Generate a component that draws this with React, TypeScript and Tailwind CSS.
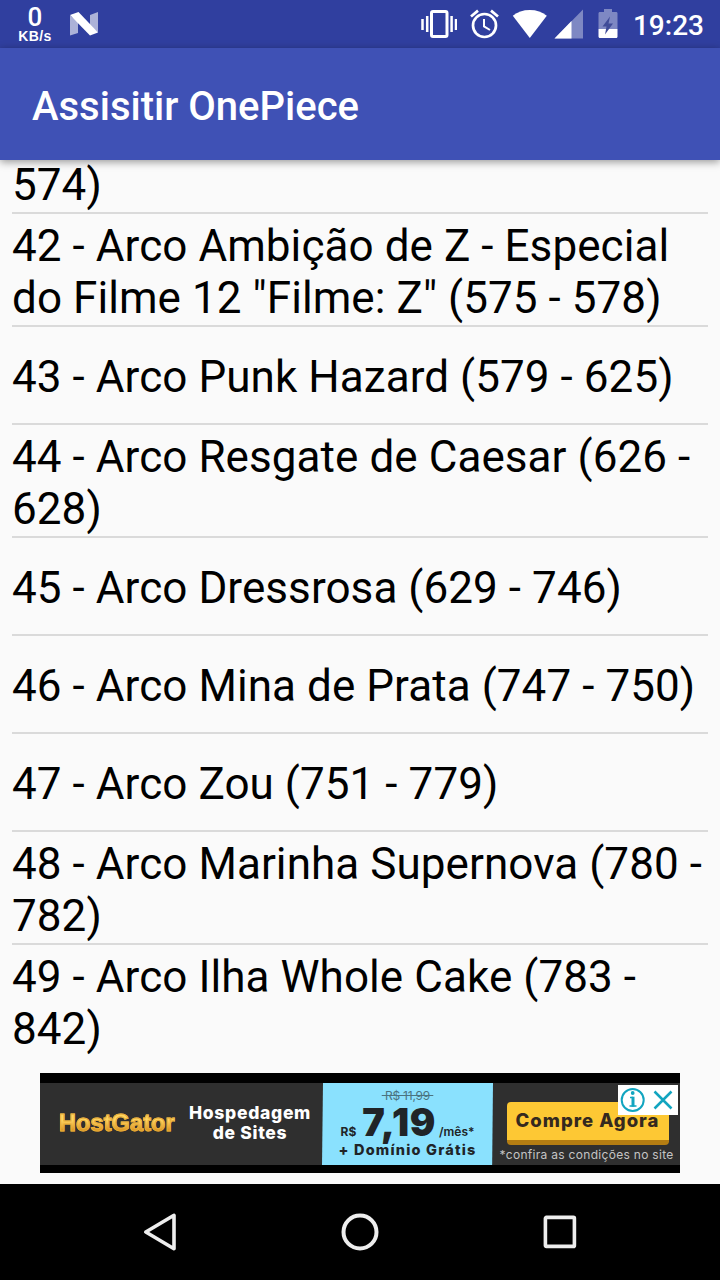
interface Arc {
  id: number
  title: string
}

const arcs: Arc[] = [
  { id: 42, title: 'Arco Ambição de Z - Especial do Filme 12 "Filme: Z" (575 - 578)' },
  { id: 43, title: 'Arco Punk Hazard (579 - 625)' },
  { id: 44, title: 'Arco Resgate de Caesar (626 - 628)' },
  { id: 45, title: 'Arco Dressrosa (629 - 746)' },
  { id: 46, title: 'Arco Mina de Prata (747 - 750)' },
  { id: 47, title: 'Arco Zou (751 - 779)' },
  { id: 48, title: 'Arco Marinha Supernova (780 - 782)' },
  { id: 49, title: 'Arco Ilha Whole Cake (783 - 842)' },
]

function StatusBar() {
  return (
    <div className="flex h-12 shrink-0 items-start bg-[#303f9f] text-white">
      <div className="ml-4 mt-[7px] flex w-[38px] flex-col items-center font-['Liberation_Sans',sans-serif] font-bold">
        <span className="h-5 font-['Roboto',sans-serif] text-[26px] font-medium leading-[21px]">0</span>
        <span className="text-[14px] leading-[18px] tracking-[0.4px]">KB/s</span>
      </div>
      <svg className="ml-4 mt-3 h-6 w-[28px]" viewBox="0 0 28 24" fill="#fff">
        <path d="M0 3.5 8 10v11L0 23.5zM20 3l8-3v20.5L20 14z" opacity=".6" />
        <path d="M0 3 8.5 0 28 20.5 20 23.5z" />
      </svg>

      <div className="grow" />

      {/* vibrate */}
      <svg className="mt-2.5 h-7 w-9" viewBox="0 0 36 28" fill="none" stroke="#fff">
        <rect x="10.5" y="1.5" width="15.5" height="25" rx="1.5" strokeWidth="3" />
        <path d="M1.5 9v11M35 9v11M6.2 6v16M30.6 6v16" strokeWidth="2.5" />
      </svg>
      {/* alarm */}
      <svg className="ml-[13px] mr-px mt-[9px] h-[30px] w-[29px]" viewBox="0 0 29 30" fill="none" stroke="#fff" strokeWidth="2.7">
        <circle cx="14.5" cy="16.5" r="11.5" />
        <path d="M1 7.5 8 1.6M28 7.5 21 1.6" />
        <path d="M14 10v7.4l6 3.6" strokeWidth="2" />
      </svg>
      {/* wifi */}
      <svg className="mx-3 mt-[9px] h-[30px] w-[36px]" viewBox="0 0 36 30" fill="#fff">
        <path d="M.8 6.8C5.5 3 11 1 17.8 1s12.3 2 17 5.8L17.8 29z" />
      </svg>
      {/* signal */}
      <svg className="-ml-[6px] mt-[9px] h-[30px] w-[30px]" viewBox="0 0 30 30" fill="#fff">
        <path d="M29 .5v29H.5z" opacity=".38" />
        <path d="M17.5 12v17.5H.5z" />
      </svg>
      {/* battery */}
      <svg className="ml-[14px] mr-px mt-[9px] h-[29px] w-5" viewBox="0 0 20 29" fill="#fff">
        <path d="M6 0h8v3h4c1 0 1.5.5 1.5 1.5V20H.5V4.5C.5 3.500 1 3 2 3h4z" opacity=".38" />
        <path d="M.5 20h19v7.5c0 .8-.4 1.5-1.5 1.5H2c-1 0-1.5-.7-1.5-1.5z" />
        <path d="M12 7.5 4.5 17.5h4L7 25.500 15 14.5h-4.5z" fill="#404c98" />
      </svg>
      <span className="ml-[14px] mr-4 mt-[9px] font-['Roboto',sans-serif] text-[28px] font-medium leading-[33px]">19:23</span>
    </div>
  )
}

function AdBanner() {
  return (
    <div className="relative mx-auto flex h-[100px] w-[640px] shrink-0 border-b-8 border-t-[10px] border-black bg-[#2f2f2f] font-['Inter',sans-serif]">
      <div className="flex w-[149px] items-center pb-px pl-[19px]">
        <span className="bg-linear-to-b from-[#ffd560] from-40% to-[#dc9521] to-70% bg-clip-text font-['Liberation_Sans',sans-serif] text-[23.5px] font-bold tracking-[0.1px] text-transparent [-webkit-text-stroke:1px_#e9ae38]">
          HostGator
        </span>
      </div>
      <div className="flex w-[122px] flex-col items-center whitespace-nowrap pt-5 text-[17.5px] font-extrabold leading-5 tracking-[0.7px] text-white">
        <span>Hospedagem</span>
        <span>de Sites</span>
      </div>
      <div className="ml-[11px] flex w-[171px] flex-col items-center whitespace-nowrap bg-[#8ae1fe] pt-[5px] text-[#202427] [clip-path:polygon(1px_0,100%_0,99.5%_100%,0_100%)]">
        <span className="text-[12px] leading-4 tracking-[-0.2px] text-[#4b7380] line-through">&nbsp;R$ 11,99&nbsp;</span>
        <div className="flex h-[36px] items-baseline leading-[37px]">
          <span className="mr-1.5 text-[12px] font-bold">R$</span>
          <span className="text-[38px] font-black tracking-[0.6px]">7,19</span>
          <span className="ml-[3px] text-[12px] font-semibold">/mês*</span>
        </div>
        <span className="text-[14.5px] font-extrabold leading-5 tracking-[1.2px]">+ Domínio Grátis</span>
      </div>
      <div className="flex grow flex-col items-center whitespace-nowrap">
        <div className="ml-0.5 mt-[19px] h-11 w-[162px] rounded-[4px] border-b-[5px] border-[#b47d12] bg-[#fdc834] text-center text-[18.5px] font-extrabold leading-[37px] tracking-[1px] text-[#34291f]">
          Compre Agora
        </div>
        <span className="text-[12px] leading-5 tracking-[0.3px] text-[#c4c4c4]">*confira as condições no site</span>
      </div>
      <div className="absolute right-[2px] top-[2px] flex h-[30px] w-[60px] items-center bg-white">
        <svg className="h-[30px] w-[60px]" viewBox="0 0 60 30" fill="none" stroke="#12a5c0">
          <circle cx="14.7" cy="15" r="11" strokeWidth="2" />
          <path d="M12 12.5h3M11.5 21h7" strokeWidth="1.6" />
          <path d="M15 11.7v10" strokeWidth="3" />
          <circle cx="14.7" cy="8" r="1.9" fill="#12a5c0" stroke="none" />
          <path d="m36.5 6.5 17 17m0-17-17 17" strokeWidth="2.5" />
        </svg>
      </div>
    </div>
  )
}

function NavigationBar() {
  return (
    <div className="flex h-24 shrink-0 items-center justify-center gap-[160px] bg-black">
      <svg className="h-10 w-10" viewBox="0 0 40 40" fill="none" stroke="#eee" strokeWidth="3.6" strokeLinejoin="round">
        <path d="M34 3.3v33.4L5.8 20z" />
      </svg>
      <svg className="h-10 w-10" viewBox="0 0 40 40" fill="none" stroke="#eee" strokeWidth="4">
        <circle cx="20" cy="20" r="16.5" />
      </svg>
      <svg className="h-10 w-10" viewBox="0 0 40 40" fill="none" stroke="#eee" strokeWidth="3.6">
        <rect x="5.4" y="5.4" width="29" height="29" rx="1" />
      </svg>
    </div>
  )
}

export default function App() {
  return (
    <div className="flex h-[1280px] w-[720px] flex-col overflow-hidden bg-[#fafafa] font-['Roboto',sans-serif]">
      <StatusBar />
      <header className="z-10 flex h-28 shrink-0 items-center bg-[#3f51b5] pl-8 pt-1.5 shadow-[0_2px_8px_rgba(0,0,0,0.4)]">
        <h1 className="text-[40px] font-medium leading-none text-white">Assisitir OnePiece</h1>
      </header>

      <ul className="h-[913px] shrink-0 overflow-hidden px-3 text-[44px] leading-[52px] tracking-[0.07px] text-black">
        <li className="h-[54px] border-b-2 border-[#dadada] leading-[50px]">574)</li>
        {arcs.map((arc) => (
          <li
            key={arc.id}
            className="flex min-h-[98px] items-center border-b-2 border-[#dadada] pb-[1.4px] pt-[5.6px] last:border-b-0"
          >
            <span>
              {arc.id} - {arc.title}
            </span>
          </li>
        ))}
      </ul>

      <AdBanner />
      <div className="grow" />
      <NavigationBar />
    </div>
  )
}
